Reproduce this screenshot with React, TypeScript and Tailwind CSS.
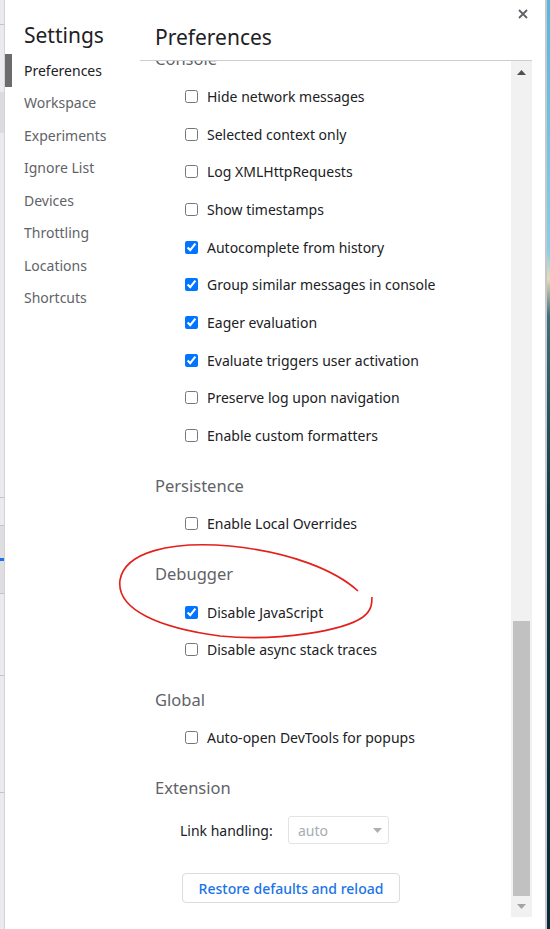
import React from 'react';

const font = { fontFamily: '"Segoe UI", "Noto Sans", "Liberation Sans", sans-serif' };

const sidebarItems = [
  'Preferences',
  'Workspace',
  'Experiments',
  'Ignore List',
  'Devices',
  'Throttling',
  'Locations',
  'Shortcuts',
];

type Row = { label: string; checked?: boolean };

const sections: { title: string; rows: Row[] }[] = [
  {
    title: 'Persistence',
    rows: [{ label: 'Enable Local Overrides' }],
  },
  {
    title: 'Debugger',
    rows: [{ label: 'Disable JavaScript', checked: true }, { label: 'Disable async stack traces' }],
  },
  {
    title: 'Global',
    rows: [{ label: 'Auto-open DevTools for popups' }],
  },
];

const consoleRows: Row[] = [
  { label: 'Hide network messages' },
  { label: 'Selected context only' },
  { label: 'Log XMLHttpRequests' },
  { label: 'Show timestamps' },
  { label: 'Autocomplete from history', checked: true },
  { label: 'Group similar messages in console', checked: true },
  { label: 'Eager evaluation', checked: true },
  { label: 'Evaluate triggers user activation', checked: true },
  { label: 'Preserve log upon navigation' },
  { label: 'Enable custom formatters' },
];

function Checkbox({ label, checked }: Row) {
  return (
    <label className="flex h-[37.67px] items-center pl-[45px] text-[14px] text-[#202124]">
      <input
        type="checkbox"
        defaultChecked={checked}
        className="m-0 h-[13px] w-[13px] accent-[#0075ff]"
      />
      <span className="ml-[9px]">{label}</span>
    </label>
  );
}

function Heading({ children }: { children: React.ReactNode }) {
  return (
    <div className="flex h-[37.67px] items-center pl-[15px] text-[16.5px] text-[#5f6368]">{children}</div>
  );
}

export default function App() {
  return (
    <div className="relative flex h-[929px] w-[550px] overflow-hidden bg-white" style={font}>
      {/* page behind the dialog, left */}
      <div className="flex w-[5px] shrink-0 flex-col border-r border-[#d2d2d8] bg-[#ebebef]">
        <div className="h-[24px]" />
        <div className="h-px bg-[#c4c4c8]" />
        <div className="h-[67px]" />
        <div className="h-[41px] bg-[#dcdce0]" />
        <div className="h-[364px]" />
        <div className="h-px bg-[#c4c4c8]" />
        <div className="h-[27px]" />
        <div className="h-[68px] border-t border-[#c4c4c8] bg-[#dedee2]">
          <div className="mt-[32px] h-[3px] bg-[#1a73e8]" />
        </div>
        <div className="h-[82px] border-t border-[#c4c4c8]" />
        <div className="h-[117px] border-t border-[#c4c4c8]" />
        <div className="h-[117px] border-t border-[#c4c4c8]" />
      </div>

      {/* sidebar */}
      <div className="w-[135px] shrink-0">
        <div className="h-[54px] pl-[19px] pt-[22px] text-[21px] leading-[26px] text-[#202124]">Settings</div>
        {sidebarItems.map((item, i) => (
          <div
            key={item}
            className={
              i === 0
                ? 'flex h-[32.5px] items-center border-l-[7px] border-[#6b6b6b] pl-[12px] text-[14px] text-[#202124]'
                : 'flex h-[32.5px] items-center pl-[19px] text-[14px] text-[#5f6368]'
            }
          >
            {item}
          </div>
        ))}
      </div>

      {/* main */}
      <div className="relative flex w-[405px] shrink-0 flex-col pr-[13px]">
        <button className="absolute right-[17px] top-[9px] p-0" aria-label="Close">
          <svg width="10" height="10" viewBox="0 0 10 10">
            <path d="M1 1L9 9M9 1L1 9" stroke="#5f6368" strokeWidth="1.8" />
          </svg>
        </button>
        <div className="h-[61px] border-b border-[#cbcdd1] pl-[15px] pt-[23px] text-[21px] leading-[28px] text-[#202124]">
          Preferences
        </div>
        <div className="flex h-[856px]">
          <div className="flex-1 overflow-hidden">
            <div className="-mt-[20px]">
              <Heading>Console</Heading>
              <div className="-mt-[1px]">
                {consoleRows.map((r) => (
                  <Checkbox key={r.label} {...r} />
                ))}
              </div>
              {sections.map((s) => (
                <div key={s.title} className="mt-[13px]">
                  <Heading>{s.title}</Heading>
                  {s.rows.map((r) => (
                    <Checkbox key={r.label} {...r} />
                  ))}
                </div>
              ))}
              <div className="mt-[13px]">
                <Heading>Extension</Heading>
                <div className="flex h-[46px] items-center pl-[40px] text-[14px] text-[#202124]">
                  <span className="w-[108px]">Link handling:</span>
                  <div className="flex h-[28px] w-[101px] items-center justify-between rounded-[3px] border border-[#e3e3e3] pl-[9px] pr-[6px] text-[14px] text-[#a8abb0]">
                    <span>auto</span>
                    <svg width="9" height="5" viewBox="0 0 9 5">
                      <path d="M0 0H9L4.5 5Z" fill="#b0b0b0" />
                    </svg>
                  </div>
                </div>
              </div>
              <div className="mt-[20px] pl-[42px]">
                <button className="h-[30px] w-[218px] rounded-[4px] border border-[#dadce0] bg-white text-[14px] font-medium text-[#1a73e8]">
                  Restore defaults and reload
                </button>
              </div>
            </div>
          </div>
          {/* scrollbar */}
          <div className="flex w-[21px] flex-col bg-[#f1f1f1]">
            <div className="flex h-[21px] items-center justify-center pt-[2px]">
              <svg width="9" height="5" viewBox="0 0 9 5">
                <path d="M4.5 0L9 5H0Z" fill="#505050" />
              </svg>
            </div>
            <div className="flex-1" />
            <div className="mx-[2px] h-[275px] bg-[#c1c1c1]" />
            <div className="flex h-[21px] items-center justify-center">
              <svg width="9" height="5" viewBox="0 0 9 5">
                <path d="M0 0H9L4.5 5Z" fill="#a3a3a3" />
              </svg>
            </div>
          </div>
        </div>
      </div>

      {/* desktop behind, right */}
      <div className="w-[5px] shrink-0 border-l-2 border-[#c8c8cc] bg-[linear-gradient(180deg,#56b6de_0%,#86cfe8_27%,#e6dcb8_30%,#3d6e7a_34%,#0e3843_55%,#092a33_100%)]" />

      {/* red annotation */}
      <svg className="pointer-events-none absolute left-0 top-0" width="550" height="929">
        <path
          d="M358 591 C335 570 290 552 230 546 C170 541 125 552 120 580 C116 610 160 628 220 636 C280 642 345 630 363 617 C372 610 372 603 372 597"
          fill="none"
          stroke="#e3201b"
          strokeWidth="1.6"
        />
      </svg>
    </div>
  );
}
